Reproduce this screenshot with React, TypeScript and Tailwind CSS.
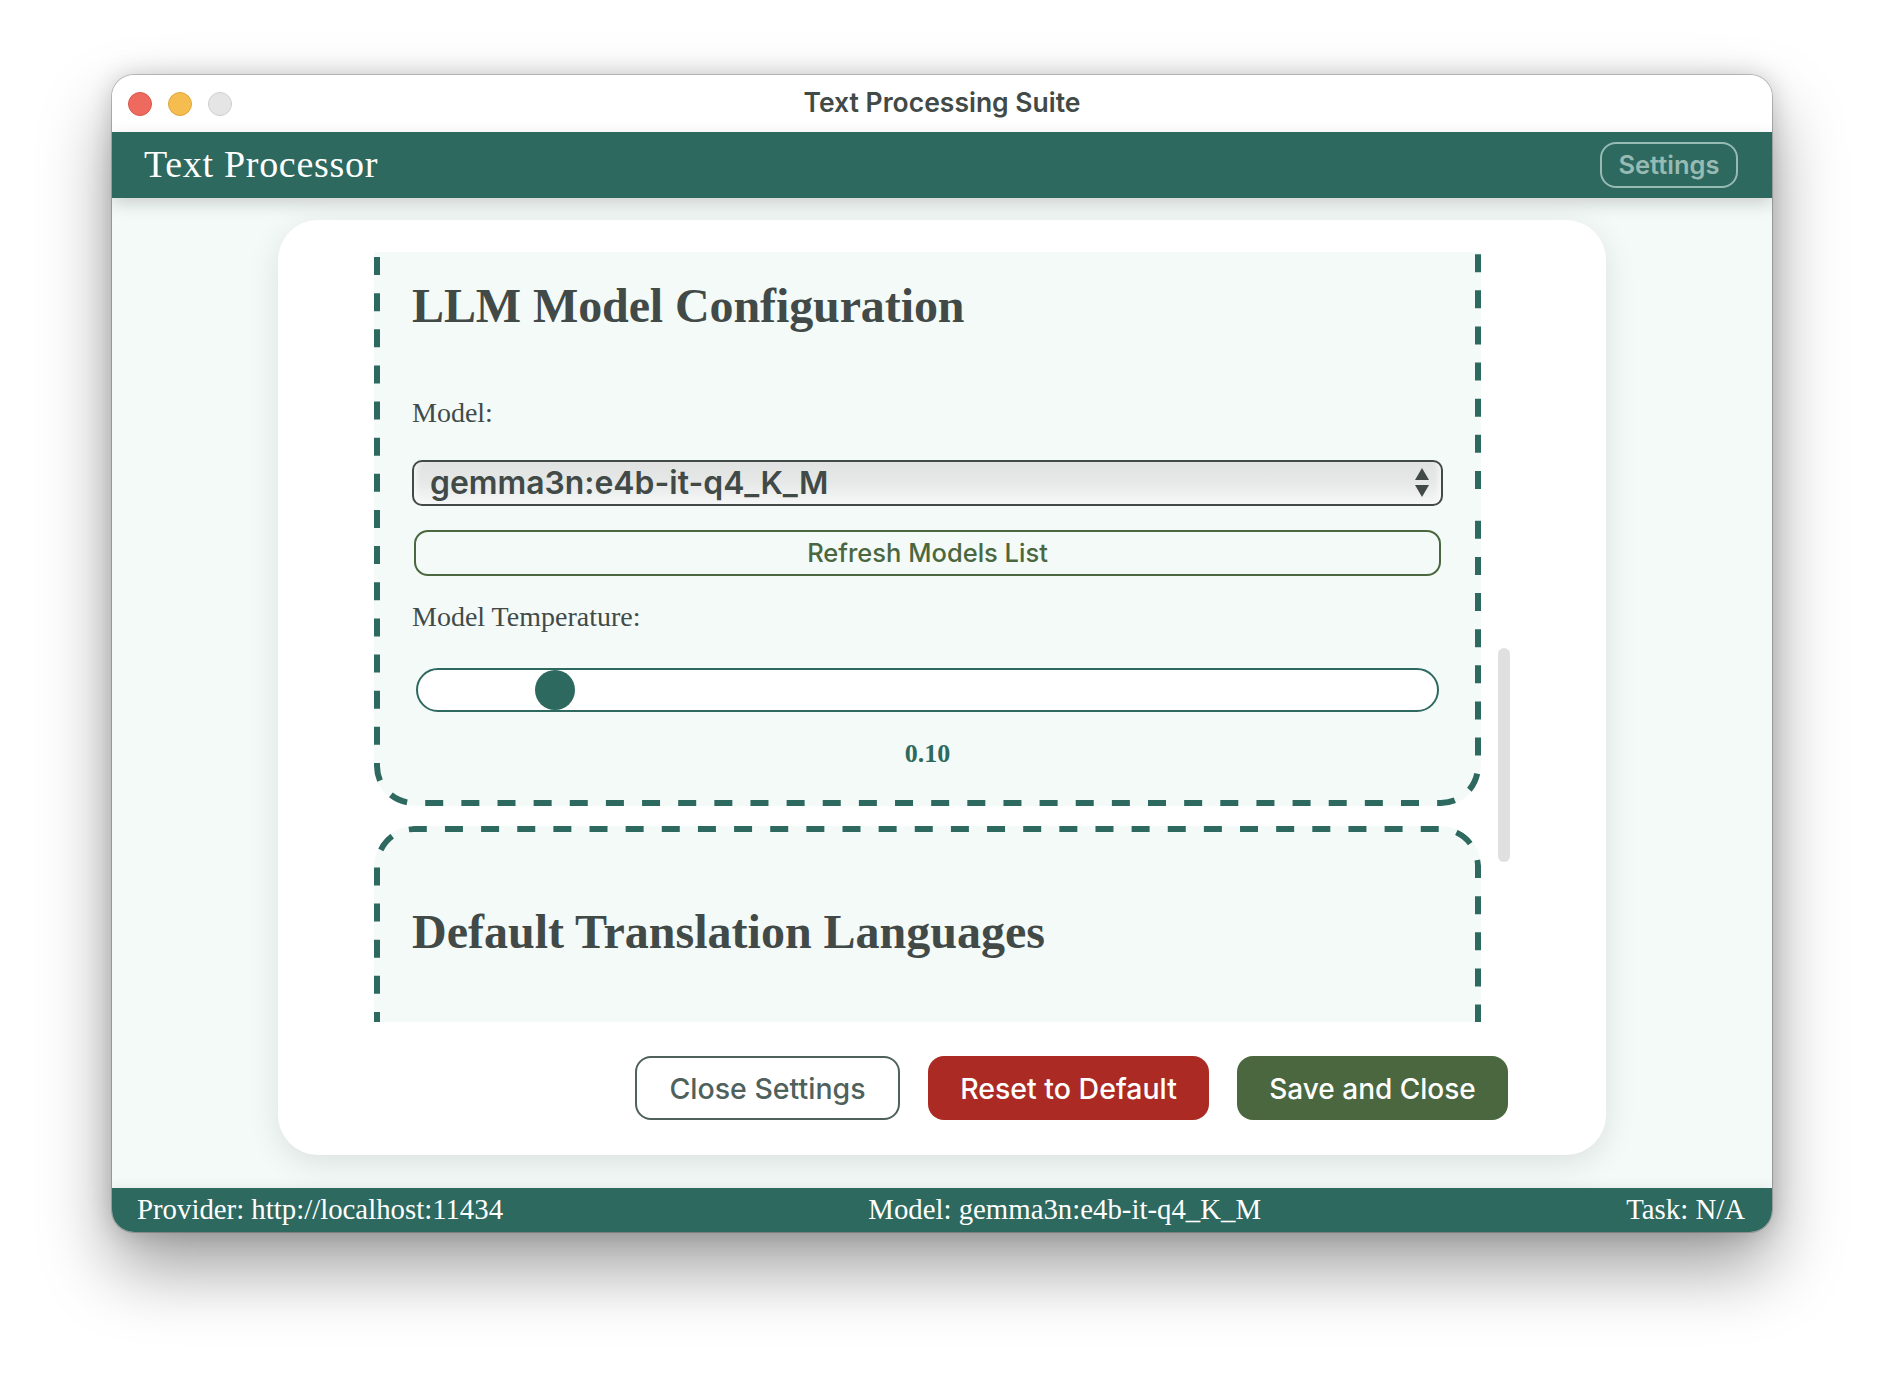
const SERIF = "font-['Liberation_Serif','Times_New_Roman',serif]";
const SANS = "font-['Inter','Noto_Sans',sans-serif]";

/** dashed outline, drawn because the dash length differs from the browser's own dashed border */
function DashOutline({ w, h, d }: { w: number; h: number; d: string }) {
  return (
    <svg className="absolute left-0 top-0 pointer-events-none" width={w} height={h} viewBox={`0 0 ${w} ${h}`} fill="none">
      <path d={d} stroke="#2d695f" strokeWidth="6" strokeDasharray="18 18.14" />
    </svg>
  );
}

function TrafficLights() {
  return (
    <div className="absolute left-[16px] top-[17px] flex gap-[16px]">
      <span className="w-[24px] h-[24px] rounded-full bg-[#ee6a5f] border border-[#d9564c]" />
      <span className="w-[24px] h-[24px] rounded-full bg-[#f5bd4f] border border-[#dea73e]" />
      <span className="w-[24px] h-[24px] rounded-full bg-[#e5e5e5] border border-[#cfcfcf]" />
    </div>
  );
}

function SectionTitle({ children, className = '' }: { children: React.ReactNode; className?: string }) {
  return <h2 className={`${SERIF} h-[60px] leading-[60px] text-[48px] font-bold text-[#424a48] whitespace-nowrap ${className}`}>{children}</h2>;
}

function FieldLabel({ children, className }: { children: React.ReactNode; className: string }) {
  return <div className={`${SERIF} h-[34px] leading-[34px] text-[28px] text-[#424a48] ${className}`}>{children}</div>;
}

function ModelSelect() {
  return (
    <div className={`${SANS} relative mt-[30px] h-[46px] rounded-[10px] border-2 border-[#424a48] bg-gradient-to-b from-[#dfe2e1] via-[#e6e9e8] to-[#f6f8f7] pl-[16px] text-[31.9px] font-semibold leading-[41px] text-[#424a48] shadow-[inset_6px_0_6px_-4px_rgba(255,255,255,0.8),inset_-6px_0_6px_-4px_rgba(255,255,255,0.8)]`}>
      gemma3n:e4b-it-q4_K_M
      <svg className="absolute right-[11px] top-[6px]" width="16" height="30" viewBox="0 0 16 30" fill="#424a48">
        <polygon points="8,0 15,12 1,12" />
        <polygon points="1,17 15,17 8,29" />
      </svg>
    </div>
  );
}

function TemperatureSlider() {
  return (
    <div className="relative mx-[4px] mt-[34px] h-[44px] rounded-[22px] border-2 border-[#2d695f] bg-white">
      <span className="absolute left-[117px] top-[0px] w-[40px] h-[40px] rounded-full bg-[#2d695f]" />
    </div>
  );
}

function ScrollArea() {
  return (
    <div className="relative h-[770px]">
      <div className="h-full w-[1107px] overflow-hidden">
        <section className="relative h-[554px] rounded-b-[40px] bg-[#f4faf8] px-[38px] pt-[24px]">
          <DashOutline
            w={1107}
            h={554}
            d="M3 5 V514 A37 37 0 0 0 40 551 H1067 A37 37 0 0 0 1104 514 V253 M1104 237 V0"
          />
          <SectionTitle className="tracking-[-0.1px]">LLM Model Configuration</SectionTitle>
          <FieldLabel className="mt-[60px]">Model:</FieldLabel>
          <ModelSelect />
          <button className={`${SANS} mx-[2px] mt-[24px] block h-[46px] w-[1027px] rounded-[14px] border-2 border-[#4a673f] text-[25.5px] font-medium text-[#4a673f]`}>
            Refresh Models List
          </button>
          <FieldLabel className="mt-[24px]">Model Temperature:</FieldLabel>
          <TemperatureSlider />
          <div className={`${SERIF} mt-[25px] h-[34px] text-center text-[26px] font-bold leading-[34px] text-[#2d695f]`}>0.10</div>
        </section>
        <section className="relative mt-[20px] h-[196px] overflow-hidden rounded-t-[40px] bg-[#f4faf8] px-[38px] pt-[76px]">
          <DashOutline
            w={1107}
            h={196}
            d="M3 204 V40 A37 37 0 0 1 40 3 H1067 A37 37 0 0 1 1104 40 V204"
          />
          <SectionTitle>Default Translation Languages</SectionTitle>
        </section>
      </div>
      <div className="absolute left-[1124px] top-[396px] h-[214px] w-[12px] rounded-full bg-[#e0e0e0]" />
    </div>
  );
}

function FooterButtons() {
  const base = `${SANS} h-[64px] rounded-[16px] pt-[2px] text-[28.5px] font-medium`;
  return (
    <div className="mt-[34px] flex justify-end gap-[28px] pr-[2px]">
      <button className={`${base} w-[265px] border-2 border-[#4f615c] bg-white text-[#4f615c]`}>Close Settings</button>
      <button className={`${base} w-[281px] bg-[#ab2b24] text-white`}>Reset to Default</button>
      <button className={`${base} w-[271px] bg-[#4a673f] text-[28px] text-white`}>Save and Close</button>
    </div>
  );
}

export default function App() {
  return (
    <div className="h-[1380px] w-[1884px] overflow-hidden bg-white pl-[112px] pt-[75px]">
      <div className="flex h-[1157px] w-[1660px] flex-col overflow-hidden rounded-[22px] bg-[#f4faf8] shadow-[0_0_0_1px_rgba(0,0,0,0.2),0_36px_70px_rgba(0,0,0,0.38),0_0_24px_rgba(0,0,0,0.18)]">
        <div className={`${SANS} relative h-[57px] shrink-0 bg-white text-center text-[26.5px] font-semibold leading-[55px] text-[#424a48]`}>
          <TrafficLights />
          Text Processing Suite
        </div>
        <header className="relative flex h-[66px] shrink-0 items-center justify-between bg-[#2d695f] pl-[32px] pr-[34px] shadow-[0_6px_16px_rgba(0,0,0,0.16)]">
          <h1 className={`${SERIF} mt-[-2px] text-[38px] tracking-[0.7px] text-white`}>Text Processor</h1>
          <button className={`${SANS} h-[46px] w-[138px] rounded-[16px] border-2 border-[#97bab3] text-[25.5px] font-semibold text-[#97bab3]`}>Settings</button>
        </header>
        <main className="flex-1 px-[166px] pt-[22px]">
          <div className="h-[935px] rounded-[40px] bg-white px-[96px] pt-[32px] shadow-[0_8px_32px_rgba(0,0,0,0.1)]">
            <ScrollArea />
            <FooterButtons />
          </div>
        </main>
        <footer className={`${SERIF} relative flex h-[44px] shrink-0 items-center justify-between bg-[#2d695f] pl-[25px] pr-[27px] text-[28.8px] text-white shadow-[0_-3px_10px_rgba(0,0,0,0.06)]`}>
          <span>Provider: http://localhost:11434</span>
          <span>Model: gemma3n:e4b-it-q4_K_M</span>
          <span>Task: N/A</span>
        </footer>
      </div>
    </div>
  );
}
